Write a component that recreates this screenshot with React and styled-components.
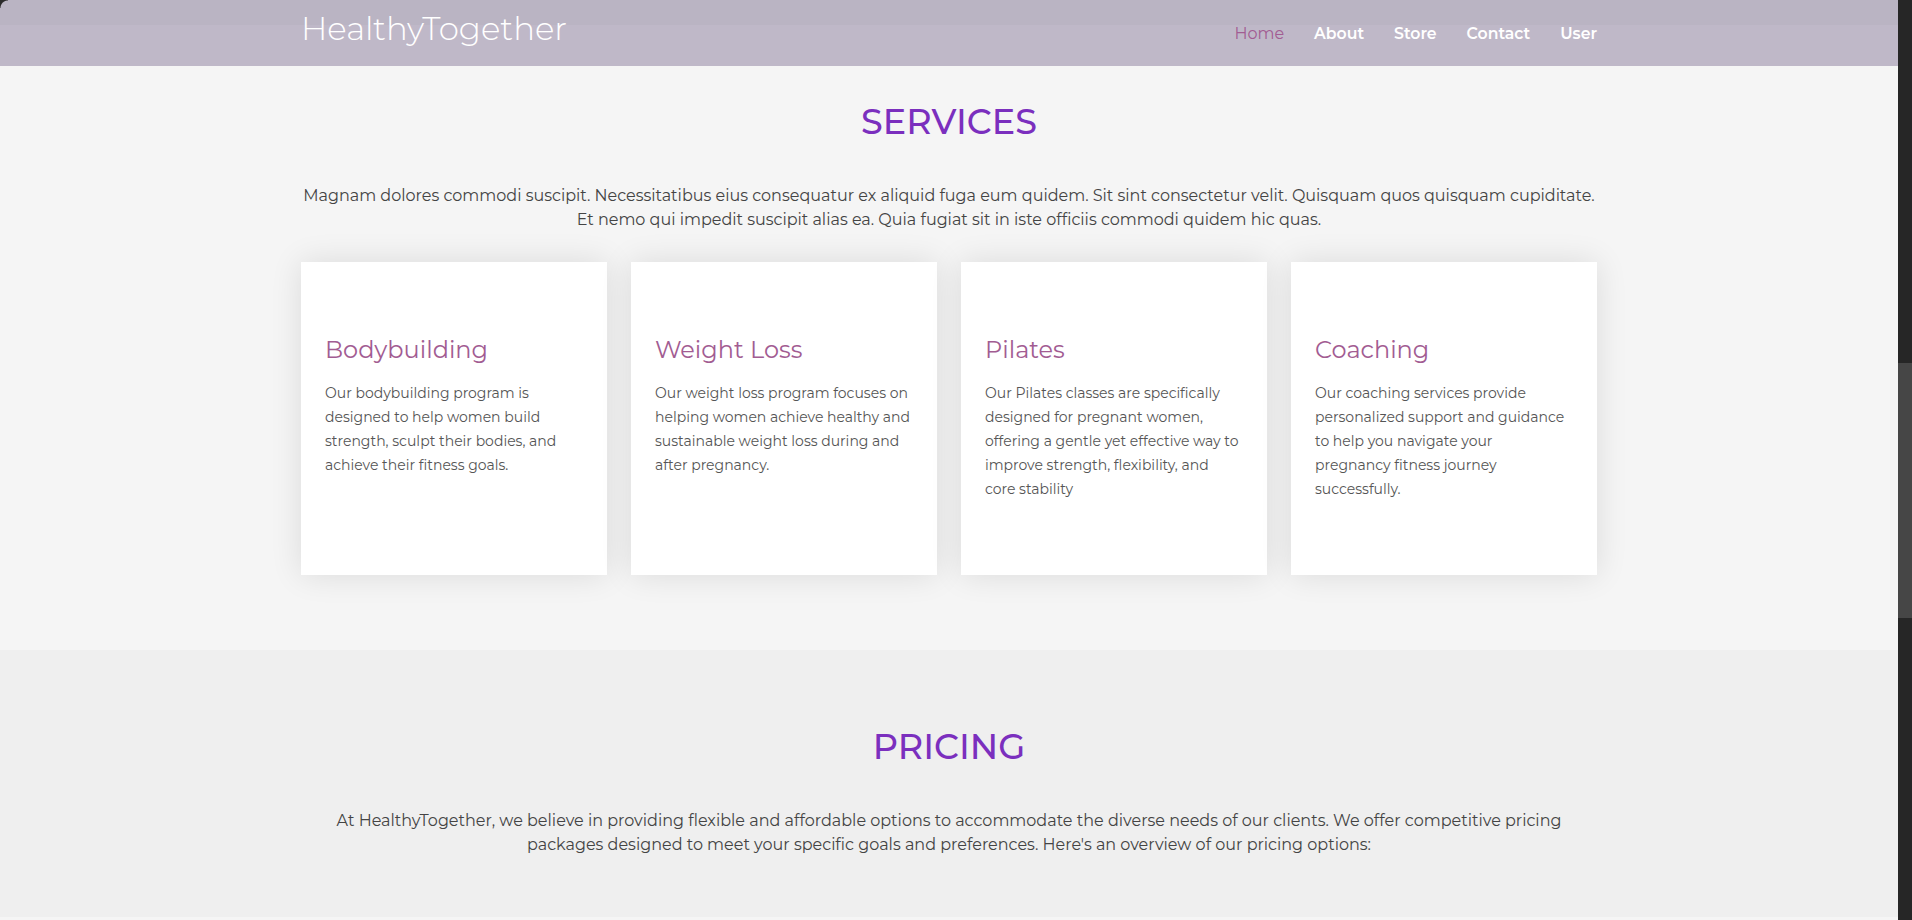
import React from 'react';
import styled, { createGlobalStyle } from 'styled-components';

const FONT = `Montserrat, "Open Sans", "Liberation Sans", sans-serif`;

const GlobalStyle = createGlobalStyle`
  html, body { margin: 0; padding: 0; height: 100%; overflow: hidden; }
  body { font-family: ${FONT}; color: #444; background: #f5f5f5; }
  * { box-sizing: border-box; }
`;

const Frame = styled.div`
  display: flex;
  height: 100vh;
  overflow: hidden;
`;
const Page = styled.div`
  flex: 1;
  min-width: 0;
  display: flex;
  flex-direction: column;
`;
const ScrollTrack = styled.div`
  width: 14px;
  flex: none;
  background: #262626;
  padding-top: 363px;
`;
const ScrollThumb = styled.div`
  height: 255px;
  background: #464646;
`;
const WindowCorner = styled.div`
  position: fixed;
  top: 0;
  left: 0;
  width: 8px;
  height: 8px;
  background: radial-gradient(circle at 100% 100%, transparent 7px, #2b2b2b 8px);
  pointer-events: none;
`;
const Header = styled.header`
  height: 66px;
  flex: none;
  background: linear-gradient(#bab4c3 0 25px, #bfb8c8 25px);
`;
const Container = styled.div`
  width: 1320px;
  max-width: 100%;
  margin: 0 auto;
  padding: 0 12px;
`;
const HeaderInner = styled(Container)`
  height: 100%;
  display: flex;
  align-items: center;
  justify-content: space-between;
`;
const Logo = styled.a`
  font-size: 32.4px;
  font-weight: 300;
  line-height: normal;
  color: #fff;
  text-decoration: none;
  padding-bottom: 10px;
`;
const Nav = styled.nav`
  display: flex;
  gap: 30px;
`;
const NavLink = styled.a`
  font-size: ${p => (p.$active ? '16px' : '15.7px')};
  font-weight: ${p => (p.$active ? 400 : 600)};
  line-height: normal;
  color: ${p => (p.$active ? '#a25c92' : '#fff')};
  text-decoration: none;
`;
const Section = styled.section`
  background: ${p => p.$bg};
  padding: ${p => p.$pad};
`;
const Title = styled.h2`
  margin: 0;
  text-align: center;
  font-size: 35px;
  font-weight: 500;
  color: #7b2fbe;
  line-height: 42px;
`;
const Lead = styled.p`
  margin: 41px 0 0;
  text-align: center;
  font-size: 16px;
  line-height: 24px;
  color: #444;
`;
const CardGrid = styled.div`
  display: grid;
  grid-template-columns: repeat(4, 1fr);
  gap: 24px;
  margin-top: 30px;
`;
const Card = styled.div`
  background: #fff;
  min-height: 313px;
  padding: 74px 24px 24px;
  box-shadow: 0 0 30px 0 rgba(0, 0, 0, 0.11);
`;
const CardTitle = styled.h4`
  margin: 0 0 16px;
  font-size: 24px;
  font-weight: 400;
  line-height: 1.2;
  color: #a25c92;
`;
const CardText = styled.p`
  margin: 0;
  font-size: 14px;
  line-height: 24px;
  color: #555;
`;

const SERVICES = [
  {
    title: 'Bodybuilding',
    lines: ['Our bodybuilding program is', 'designed to help women build', 'strength, sculpt their bodies, and', 'achieve their fitness goals.'],
  },
  {
    title: 'Weight Loss',
    lines: ['Our weight loss program focuses on', 'helping women achieve healthy and', 'sustainable weight loss during and', 'after pregnancy.'],
  },
  {
    title: 'Pilates',
    lines: ['Our Pilates classes are specifically', 'designed for pregnant women,', 'offering a gentle yet effective way to', 'improve strength, flexibility, and', 'core stability'],
  },
  {
    title: 'Coaching',
    lines: ['Our coaching services provide', 'personalized support and guidance', 'to help you navigate your', 'pregnancy fitness journey', 'successfully.'],
  },
];

const NAV = ['Home', 'About', 'Store', 'Contact', 'User'];

export default function App() {
  return (
    <>
      <GlobalStyle />
      <Frame>
        <Page>
          <Header>
            <HeaderInner>
              <Logo href="#">HealthyTogether</Logo>
              <Nav>
                {NAV.map((n, i) => (
                  <NavLink key={n} href="#" $active={i === 0}>{n}</NavLink>
                ))}
              </Nav>
            </HeaderInner>
          </Header>
          <Section $bg="#f5f5f5" $pad="35px 0 75px">
            <Container>
              <Title>SERVICES</Title>
              <Lead>
                Magnam dolores commodi suscipit. Necessitatibus eius consequatur ex aliquid fuga eum quidem. Sit sint consectetur velit. Quisquam quos quisquam cupiditate. Et nemo qui impedit suscipit alias ea. Quia fugiat sit in iste officiis commodi quidem hic quas.
              </Lead>
              <CardGrid>
                {SERVICES.map(s => (
                  <Card key={s.title}>
                    <CardTitle>{s.title}</CardTitle>
                    <CardText>
                      {s.lines.map((l, i) => (
                        <React.Fragment key={i}>
                          {i > 0 && <br />}
                          {l}
                        </React.Fragment>
                      ))}
                    </CardText>
                  </Card>
                ))}
              </CardGrid>
            </Container>
          </Section>
          <Section $bg="#efefef" $pad="76px 0 60px">
            <Container>
              <Title>PRICING</Title>
              <Lead>
                At HealthyTogether, we believe in providing flexible and affordable options to accommodate the diverse needs of our clients. We offer competitive pricing packages designed to meet your specific goals and preferences. Here's an overview of our pricing options:
              </Lead>
            </Container>
          </Section>
        </Page>
        <ScrollTrack>
          <ScrollThumb />
        </ScrollTrack>
      </Frame>
      <WindowCorner />
    </>
  );
}
